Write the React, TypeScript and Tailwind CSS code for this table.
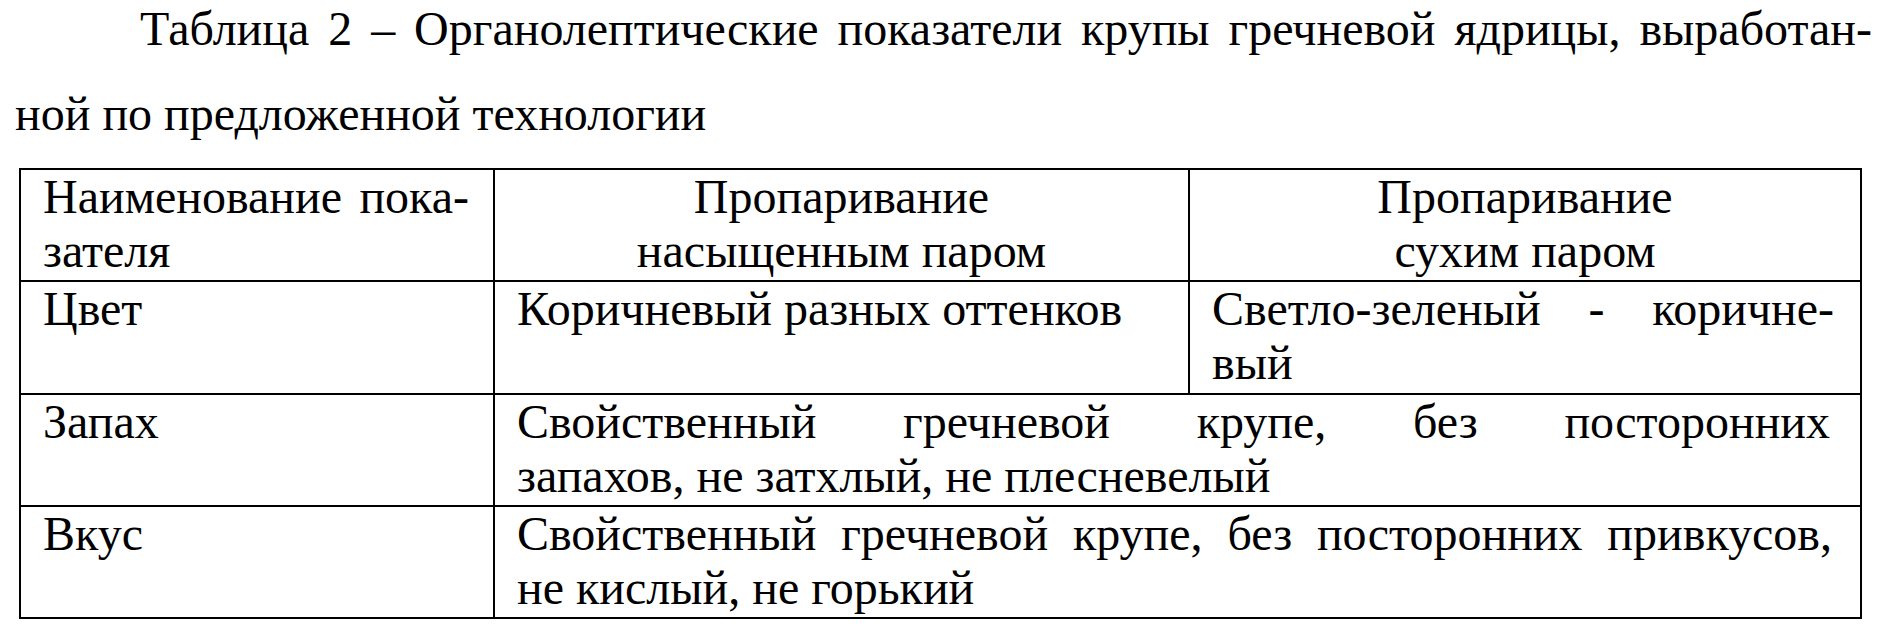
const serif = "font-['Liberation_Serif','Times_New_Roman',serif]";

function JustLine({ children }: { children: React.ReactNode }) {
  return <div className="text-justify [text-align-last:justify]">{children}</div>;
}

export default function App() {
  return (
    <main className={`h-[627px] w-[1889px] overflow-hidden bg-white text-[48px] text-black ${serif}`}>
      <div className="pl-[15px] pr-[17px]">
        <div className="pl-[125px] leading-[58px]">
          <JustLine>
            Таблица 2 – Органолептические показатели крупы гречневой ядрицы, выработан-
          </JustLine>
        </div>
        <p className="mt-[27px] leading-[58px]">ной по предложенной технологии</p>
      </div>

      <div className="mt-[25px] ml-[19px] grid w-[1843px] grid-cols-[474px_695px_672px] border-t-2 border-l-2 border-black leading-[54px]">
        {/* header */}
        <div className="h-[112px] border-r-2 border-b-2 border-black pl-[22px] pr-[24px]">
          <JustLine>Наименование пока-</JustLine>
          <div>зателя</div>
        </div>
        <div className="h-[112px] border-r-2 border-b-2 border-black px-[22px] text-center">
          <div>Пропаривание</div>
          <div>насыщенным паром</div>
        </div>
        <div className="h-[112px] border-r-2 border-b-2 border-black px-[22px] text-center">
          <div>Пропаривание</div>
          <div>сухим паром</div>
        </div>

        {/* Цвет */}
        <div className="h-[113px] border-r-2 border-b-2 border-black pl-[22px] pr-[24px]">Цвет</div>
        <div className="h-[113px] border-r-2 border-b-2 border-black pl-[22px] pr-[24px]">
          Коричневый разных оттенков
        </div>
        <div className="h-[113px] border-r-2 border-b-2 border-black pl-[22px] pr-[26px]">
          <JustLine>Светло-зеленый - коричне-</JustLine>
          <div>вый</div>
        </div>

        {/* Запах */}
        <div className="h-[112px] border-r-2 border-b-2 border-black pl-[22px] pr-[24px]">Запах</div>
        <div className="col-span-2 h-[112px] border-r-2 border-b-2 border-black pl-[22px] pr-[30px]">
          <JustLine>Свойственный гречневой крупе, без посторонних</JustLine>
          <div>запахов, не затхлый, не плесневелый</div>
        </div>

        {/* Вкус */}
        <div className="h-[112px] border-r-2 border-b-2 border-black pl-[22px] pr-[24px]">Вкус</div>
        <div className="col-span-2 h-[112px] border-r-2 border-b-2 border-black pl-[22px] pr-[28px]">
          <JustLine>Свойственный гречневой крупе, без посторонних привкусов,</JustLine>
          <div>не кислый, не горький</div>
        </div>
      </div>
    </main>
  );
}
